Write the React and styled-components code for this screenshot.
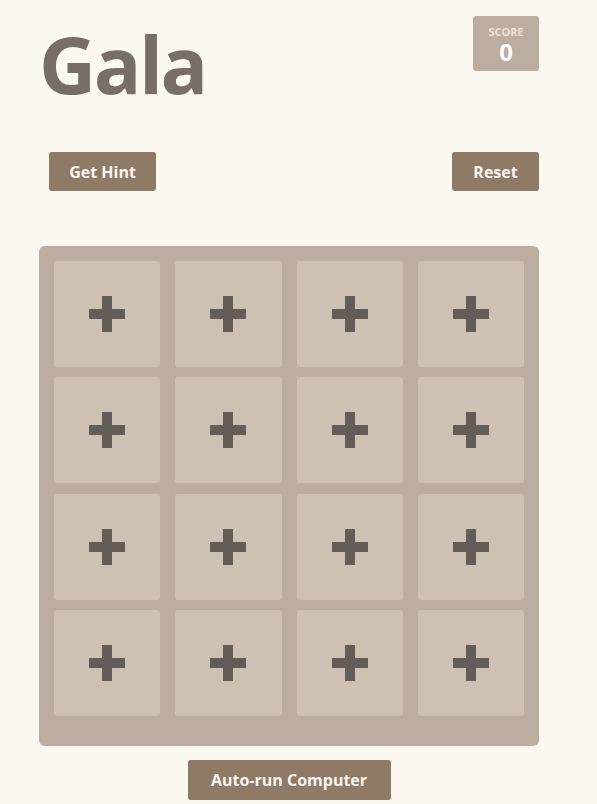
import React from "react";
import styled, { createGlobalStyle } from "styled-components";

const GlobalStyle = createGlobalStyle`
  html, body {
    margin: 0;
    padding: 0;
    background: #faf8ef;
    font-family: "Open Sans", "Liberation Sans", sans-serif;
    color: #776e65;
  }
`;

const Container = styled.div`
  width: 500px;
  padding-left: 39px;
  padding-bottom: 20px;
`;

const Header = styled.div`
  display: flex;
  justify-content: space-between;
  align-items: flex-start;
  padding-top: 16px;
  height: 120px;
`;

const Title = styled.h1`
  margin: 8px 0 0 0;
  font-size: 79px;
  line-height: 80px;
  font-weight: 700;
  color: #776e65;
  letter-spacing: -2.5px;
`;

const ScoreBox = styled.div`
  width: 66px;
  height: 55px;
  background: #bbada0;
  border-radius: 3px;
  display: flex;
  flex-direction: column;
  align-items: center;
  padding-top: 9px;
  box-sizing: border-box;
`;

const ScoreLabel = styled.div`
  font-size: 11px;
  line-height: 13px;
  font-weight: 700;
  color: #eee4da;
`;

const ScoreValue = styled.div`
  font-size: 24px;
  line-height: 28px;
  font-weight: 700;
  color: #ffffff;
`;

const Controls = styled.div`
  display: flex;
  justify-content: space-between;
  padding-left: 10px;
  margin-top: 16px;
`;

const Button = styled.button`
  height: ${(p) => p.$h || 39}px;
  width: ${(p) => p.$w}px;
  padding: 0;
  border: none;
  border-radius: 3px;
  background: #8f7a66;
  color: #f9f6f2;
  font-family: "Open Sans", "Liberation Sans", sans-serif;
  font-size: 16px;
  font-weight: 700;
  cursor: pointer;
`;

const Board = styled.div`
  margin-top: 55px;
  width: 500px;
  height: 500px;
  box-sizing: border-box;
  background: #bbada0;
  border-radius: 6px;
  padding: 15px 15px 30px;
  display: grid;
  grid-template-columns: repeat(4, 1fr);
  grid-auto-rows: 106px;
  column-gap: 15px;
  row-gap: 10.33px;
`;

const Cell = styled.div`
  background: #cdc1b4;
  border-radius: 3px;
  display: flex;
  align-items: center;
  justify-content: center;
`;

const Footer = styled.div`
  display: flex;
  justify-content: center;
  margin-top: 14px;
`;

const Plus = () => (
  <svg width="36" height="36" viewBox="0 0 36 36">
    <rect x="13" y="0" width="10" height="36" fill="#645d57" />
    <rect x="0" y="13" width="36" height="10" fill="#645d57" />
  </svg>
);

export default function App() {
  const cells = Array.from({ length: 16 });
  return (
    <>
      <GlobalStyle />
      <Container>
        <Header>
          <Title>Gala</Title>
          <ScoreBox>
            <ScoreLabel>SCORE</ScoreLabel>
            <ScoreValue>0</ScoreValue>
          </ScoreBox>
        </Header>
        <Controls>
          <Button $w={107}>Get Hint</Button>
          <Button $w={87}>Reset</Button>
        </Controls>
        <Board>
          {cells.map((_, i) => (
            <Cell key={i}>
              <Plus />
            </Cell>
          ))}
        </Board>
        <Footer>
          <Button $w={203} $h={40}>Auto-run Computer</Button>
        </Footer>
      </Container>
    </>
  );
}
